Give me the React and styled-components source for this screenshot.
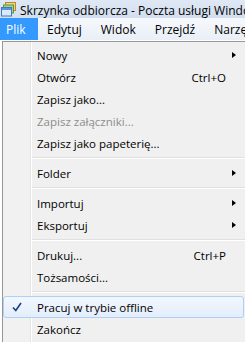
import React from 'react';
import styled, { createGlobalStyle } from 'styled-components';

const GlobalStyle = createGlobalStyle`
    html, body {
        margin: 0;
        padding: 0;
        background: #ffffff;
        overflow: hidden;
    }
    body {
        font-family: "Open Sans", "Noto Sans", "Liberation Sans", sans-serif;
        font-size: 11.5px;
        color: #000000;
    }
`;

const Window = styled.div`
    width: 245px;
    height: 342px;
    overflow: hidden;
    background: #ffffff;
`;

const TitleBar = styled.div`
    height: 18px;
    display: flex;
    align-items: center;
    gap: 4px;
    padding-left: 1px;
    background: linear-gradient(to bottom, #dfe8f4, #d2dff0);
    white-space: nowrap;
    overflow: hidden;
    & > svg {
        flex-shrink: 0;
    }
`;

const TitleText = styled.span`
    font-size: 12px;
    color: #000000;
    padding-top: 2px;
`;

const MenuBar = styled.div`
    height: 22px;
    display: flex;
    align-items: stretch;
    background: linear-gradient(to bottom, #f6f8fc, #e9eff7);
    white-space: nowrap;
`;

const BarItem = styled.div`
    display: flex;
    align-items: center;
    padding: 0 9.5px;
    font-size: 12px;
    color: ${(p) => (p.$active ? '#ffffff' : '#000000')};
    background: ${(p) => (p.$active ? '#3399ff' : 'transparent')};
    &:first-child {
        padding-left: 6px;
        padding-right: 12px;
    }
`;

const Dropdown = styled.div`
    margin: 1px 0 0 2px;
    width: 243px;
    box-sizing: border-box;
    border: 1px solid #979797;
    border-right: none;
    padding: 2px 0 2px 0;
    background: linear-gradient(
        to right,
        #f1f1f1 27px,
        #e2e3e3 27px,
        #e2e3e3 28px,
        #ffffff 28px,
        #ffffff 29px,
        #f0f0f0 29px
    );
`;

const Item = styled.div`
    position: relative;
    height: 22px;
    box-sizing: border-box;
    display: flex;
    align-items: center;
    margin-right: 1px;
    padding-left: 33px;
    color: ${(p) => (p.$disabled ? '#8d8d8d' : '#000000')};
    border: 1px solid ${(p) => (p.$hover ? '#aecff7' : 'transparent')};
    border-radius: 3px;
    background: ${(p) =>
        p.$hover ? 'linear-gradient(to bottom, #f2f7fe, #e3eefb)' : 'transparent'};
`;

const Label = styled.span`
    flex: 1;
    white-space: nowrap;
`;

const Shortcut = styled.span`
    margin-right: 17px;
    white-space: nowrap;
`;

const Arrow = styled.span`
    width: 0;
    height: 0;
    margin-right: 7px;
    border-top: 3.5px solid transparent;
    border-bottom: 3.5px solid transparent;
    border-left: 4px solid #000000;
`;

const Check = styled.svg`
    position: absolute;
    left: 8px;
    top: 5px;
`;

const Separator = styled.div`
    height: 8px;
    display: flex;
    align-items: center;
    padding-left: 29px;
    &::after {
        content: '';
        flex: 1;
        height: 1px;
        border-top: 1px solid #e0e0e0;
        background: #ffffff;
    }
`;

const MailIcon = () => (
    <svg width="15" height="15" viewBox="0 0 15 15">
        <rect x="4.5" y="0.5" width="10" height="8" fill="#f3d27a" stroke="#b88a2c" />
        <rect x="2.5" y="3" width="10" height="8" fill="#9fd38a" stroke="#5a9a45" />
        <rect x="0.5" y="5.5" width="10" height="8.5" fill="#dbe9fa" stroke="#3f78c0" />
        <rect x="1" y="6" width="9" height="2" fill="#5b95dc" />
    </svg>
);

const menu = [
    { label: 'Nowy', arrow: true },
    { label: 'Otwórz', shortcut: 'Ctrl+O' },
    { label: 'Zapisz jako...' },
    { label: 'Zapisz załączniki...', disabled: true },
    { label: 'Zapisz jako papeterię...' },
    { sep: true },
    { label: 'Folder', arrow: true },
    { sep: true },
    { label: 'Importuj', arrow: true },
    { label: 'Eksportuj', arrow: true },
    { sep: true },
    { label: 'Drukuj...', shortcut: 'Ctrl+P' },
    { label: 'Tożsamości...' },
    { sep: true },
    { label: 'Pracuj w trybie offline', checked: true, hover: true },
    { label: 'Zakończ' },
];

const App = () => {
    return (
        <Window>
            <GlobalStyle />
            {/*title---------------------------------------------*/}
            <TitleBar>
                <MailIcon />
                <TitleText>Skrzynka odbiorcza - Poczta usługi Windows Live</TitleText>
            </TitleBar>

            {/*menu bar---------------------------------------------*/}
            <MenuBar>
                <BarItem $active>Plik</BarItem>
                <BarItem>Edytuj</BarItem>
                <BarItem>Widok</BarItem>
                <BarItem>Przejdź</BarItem>
                <BarItem>Narzędzia</BarItem>
            </MenuBar>

            {/*dropdown---------------------------------------------*/}
            <Dropdown>
                {menu.map((e, i) =>
                    e.sep ? (
                        <Separator key={i} />
                    ) : (
                        <Item key={i} $disabled={e.disabled} $hover={e.hover}>
                            {e.checked && (
                                <Check width="10" height="10" viewBox="0 0 10 10">
                                    <path
                                        d="M1 5.5 L3.8 8.5 L9 1"
                                        fill="none"
                                        stroke="#1c3d8c"
                                        strokeWidth="1.6"
                                    />
                                </Check>
                            )}
                            <Label>{e.label}</Label>
                            {e.shortcut && <Shortcut>{e.shortcut}</Shortcut>}
                            {e.arrow && <Arrow />}
                        </Item>
                    )
                )}
            </Dropdown>
        </Window>
    );
};

export default App;
